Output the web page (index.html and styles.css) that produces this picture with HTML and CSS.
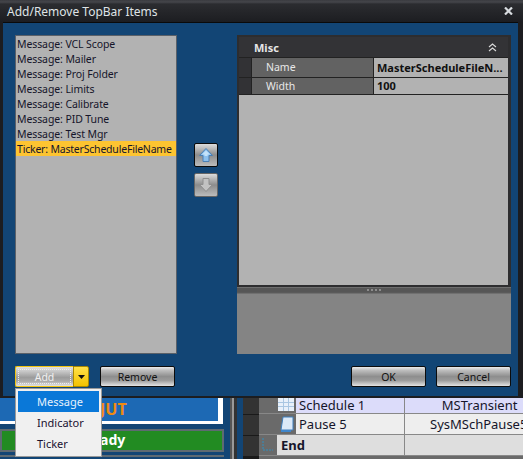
FILE: index.html
```html
<!DOCTYPE html>
<html lang="en">
<head>
<meta charset="utf-8">
<title>Add/Remove TopBar Items</title>
<link rel="stylesheet" href="styles.css">
</head>
<body>
<div class="page">
  <div class="dialog">
    <div class="titlebar">
      <span class="title">Add/Remove TopBar Items</span>
      <svg class="close" width="9" height="8" viewBox="0 0 9 8"><path d="M1 0.5 L8 7.5 M8 0.5 L1 7.5" stroke="#d8dce0" stroke-width="2.2" fill="none"/></svg>
    </div>
    <div class="body">
      <div class="main">
        <div class="list">
          <div class="item">Message: VCL Scope</div>
          <div class="item">Message: Mailer</div>
          <div class="item">Message: Proj Folder</div>
          <div class="item">Message: Limits</div>
          <div class="item">Message: Calibrate</div>
          <div class="item">Message: PID Tune</div>
          <div class="item">Message: Test Mgr</div>
          <div class="item selected">Ticker: MasterScheduleFileName</div>
        </div>
        <div class="movers">
          <button class="mover active" aria-label="Move up">
            <svg width="16" height="16" viewBox="0 0 16 16"><path d="M8 1.5 L14.5 8.5 H11 V14.5 H5 V8.5 H1.5 Z" fill="#8cc0ee" stroke="#4a7fb5"/><path d="M8 3.5 L12 7.5 H9.5 V9 H6.5 V7.5 H4 Z" fill="#c4e2fa"/></svg>
          </button>
          <button class="mover" aria-label="Move down">
            <svg width="16" height="16" viewBox="0 0 16 16"><path d="M8 14.5 L14.5 7.5 H11 V1.5 H5 V7.5 H1.5 Z" fill="#c2c2c2" stroke="#8e8e8e"/></svg>
          </button>
        </div>
        <div class="props">
          <div class="grid-area">
            <div class="cat">
              <span class="cat-name">Misc</span>
              <svg class="chev" width="9" height="9" viewBox="0 0 9 9"><path d="M1 4 L4.5 1 L8 4 M1 8 L4.5 5 L8 8" stroke="#dcdcdc" stroke-width="1.1" fill="none"/></svg>
            </div>
            <div class="prop">
              <span class="gutter"></span>
              <span class="pname">Name</span>
              <span class="pval">MasterScheduleFileN...</span>
            </div>
            <div class="prop">
              <span class="gutter"></span>
              <span class="pname">Width</span>
              <span class="pval">100</span>
            </div>
          </div>
          <div class="splitter"><i></i><i></i><i></i><i></i></div>
          <div class="desc"></div>
        </div>
      </div>
      <div class="actions">
        <div class="split">
          <button class="btn add"><span class="add-label">Add</span></button>
          <button class="drop" aria-label="Open"><svg width="7" height="4" viewBox="0 0 7 4"><path d="M0 0 H7 L3.5 4 Z" fill="#111"/></svg></button>
        </div>
        <button class="btn">Remove</button>
        <span class="spacer"></span>
        <button class="btn">OK</button>
        <button class="btn">Cancel</button>
      </div>
    </div>
  </div>
  <div class="app">
    <div class="app-left">
      <div class="tile-blue"><span class="tile-text">JUT</span></div>
      <div class="tile-green">ady</div>
      <div class="tile-next"></div>
    </div>
    <div class="app-rails"></div>
    <div class="app-keys"><i class="key-short"></i><i></i><i></i></div>
    <div class="app-table">
      <div class="row lilac">
        <span class="ico"><svg width="16" height="13" viewBox="0 0 16 13"><path d="M0 0 H16 V13 H0 Z" fill="#e8f0fa"/><path d="M0 4.5 H16 M0 8.5 H16 M5.5 0 V13 M10.5 0 V13" stroke="#a9c6e2" fill="none"/></svg></span>
        <span class="c1">Schedule 1</span><span class="c2">MSTransient</span>
      </div>
      <div class="row plain">
        <span class="ico"><svg width="14" height="17" viewBox="0 0 14 17"><path d="M3 1 H13 V14 H1 Z" fill="#dbe9f7" stroke="#3f7fbd"/><path d="M1 14 H11 V16 H1 Z" fill="#3f86cc"/></svg></span>
        <span class="c1">Pause 5</span><span class="c2 clip">SysMSchPause5</span>
      </div>
      <div class="row end">
        <span class="ico end-ico"><svg width="14" height="16" viewBox="0 0 14 16"><path d="M2 1 V13 H12" stroke="#2f8fc0" stroke-dasharray="2 1" fill="none"/></svg></span>
        <span class="c1 bold">End</span><span class="c2"></span>
      </div>
    </div>
  </div>
  <div class="menu">
    <div class="menu-item hot">Message</div>
    <div class="menu-item">Indicator</div>
    <div class="menu-item">Ticker</div>
  </div>
</div>
</body>
</html>
```
FILE: styles.css
```css
* { box-sizing: border-box; }
html, body { margin: 0; padding: 0; }
body { width: 523px; height: 459px; overflow: hidden; background: #2a2a2a; font-family: "Noto Sans", Tahoma, sans-serif; font-size: 11px; color: #15152a; }
.page { position: relative; width: 523px; height: 459px; display: flex; flex-direction: column; }
.dialog { height: 398px; flex: none; display: flex; flex-direction: column; background: #1c1d20; }
.titlebar { height: 22px; flex: none; display: flex; align-items: center; justify-content: space-between; padding: 0 10px 0 7px; background: linear-gradient(#3a3b40 0, #45464b 2px, #2b2c30 4px, #1c1d21 100%); }
.title { color: #dfe3e6; font-size: 12px; }
.body { flex: 1; margin: 0 5px 2px 3px; border-top: 1px solid #0a0a0a; background: #124575; padding: 12px 7px 9px 12px; display: flex; flex-direction: column; }
.main { height: 319px; flex: none; display: flex; }
.list { width: 162px; flex: none; background: #b2b2b2; border: 1px solid #5a6068; }
.item { height: 15px; line-height: 17px; padding-left: 1px; white-space: nowrap; font-size: 10.5px; letter-spacing: -.1px; }
.item.selected { background: #fdc431; letter-spacing: -.2px; }
.movers { width: 60px; flex: none; display: flex; flex-direction: column; align-items: center; gap: 6px; padding-top: 108px; padding-right: 2px; }
.mover { width: 24px; height: 24px; padding: 0; border: 1px solid #666; border-radius: 2px; background: linear-gradient(#dcdcdc, #8c8c8c 50%, #bcbcbc); display: flex; align-items: center; justify-content: center; }
.mover.active { border-color: #0a0a0a; }
.props { flex: 1; display: flex; flex-direction: column; }
.grid-area { height: 252px; flex: none; background: #b2b2b2; border: 2px solid #2d2d2f; border-right-width: 3px; }
.cat { height: 20px; background: #333336; display: flex; align-items: center; justify-content: space-between; padding: 0 11px 0 15px; }
.cat-name { color: #e6e6e6; font-weight: 700; font-size: 11px; }
.prop { height: 20px; display: flex; border-top: 1px solid #222; }
.prop:last-child { height: 18px; border-bottom: 1px solid #222; }
.prop:last-child .pname, .prop:last-child .pval { line-height: 16px; }
.gutter { width: 13px; flex: none; background: #323235; border-right: 1px solid #222; }
.pname { width: 122px; flex: none; background: #626262; color: #e8e8e8; padding-left: 14px; font-size: 10.5px; line-height: 19px; border-right: 1px solid #222; }
.pval { flex: 1; background: #b2b2b2; color: #101010; font-weight: 700; font-size: 11px; line-height: 19px; padding-left: 3px; white-space: nowrap; overflow: hidden; }
.splitter { height: 5px; flex: none; background: #565656; border-top: 1px solid #6e6e6e; display: flex; align-items: center; justify-content: center; gap: 2px; }
.splitter i { width: 2px; height: 2px; background: #8c8c8c; }
.desc { flex: 1; background: #848484; border-top: 1px solid #5a5a5a; box-shadow: inset 0 1px 0 #707070; }
.actions { margin-top: 12px; display: flex; gap: 11px; height: 21px; }
.spacer { flex: 1; }
.btn { width: 75px; height: 21px; padding: 0; border: 1px solid #0c0c0c; border-radius: 2px; font: inherit; font-size: 10.5px; color: #111; background: linear-gradient(#ececec 0, #bdbdbd 18%, #8e8e8e 50%, #9a9a9a 70%, #e4e4e4 100%); }
.actions .btn:last-child { margin-left: -1px; }
.split { display: flex; width: 74px; }
.btn.add { width: 58px; border: 1px solid #f1c40f; border-right: 0; border-radius: 2px 0 0 2px; color: #f0f0f0; background: linear-gradient(#e2e2e2 0, #c4c4c4 25%, #9c9c9c 55%, #aaa 75%, #e4e4e4 100%); display: flex; align-items: center; justify-content: center; padding: 2px; }
.add-label { display: block; width: 100%; height: 100%; line-height: 15px; border: 1px dotted #eee; }
.drop { width: 16px; height: 21px; padding: 0; border: 1px solid #a98800; border-radius: 0 2px 2px 0; background: linear-gradient(#ffe14a, #f2c200); display: flex; align-items: center; justify-content: center; }
.app { flex: 1; display: flex; background: #124575; min-height: 0; overflow: hidden; }
.app-left { width: 230px; flex: none; display: flex; flex-direction: column; }
.tile-blue { width: 223px; height: 26px; flex: none; background: #1d69b4; border: 4px solid #fff; border-width: 0 5px 3px 0; padding-left: 100px; font-weight: 700; font-size: 16px; line-height: 22px; color: #f08a10; }
.tile-green { width: 224px; height: 23px; flex: none; margin-top: 5px; background: #228b22; border: 2px solid #5e6a72; color: #fff; font-weight: 700; font-size: 14px; line-height: 17px; padding-left: 98px; }
.tile-next { width: 224px; height: 2px; flex: none; margin-top: 3px; background: #5e6a72; }
.app-rails { width: 13px; flex: none; background: linear-gradient(90deg, #555 0 2px, #999 2px 4px, #333 4px 7px, #124575 7px 100%); }
.app-keys { width: 16px; flex: none; background: #1a1a1a; display: flex; flex-direction: column; gap: 1px; }
.app-keys i { height: 20px; flex: none; background: #333; }
.app-keys .key-short { height: 16px; }
.app-table { flex: 1; background: #6a6a6a; display: flex; flex-direction: column; }
.row { height: 21px; display: flex; align-items: center; flex: none; font-size: 13px; border-bottom: 1px solid #888; color: #15152a; }
.ico { width: 37px; flex: none; align-self: stretch; background: #6a6a6a; display: flex; align-items: center; justify-content: flex-end; padding-right: 2px; }
.end-ico { width: 18px; justify-content: flex-start; padding-left: 2px; }
.c1 { width: 109px; flex: none; padding-left: 3px; align-self: stretch; line-height: 20px; border-right: 1px solid #888; }
.c2 { flex: 1; white-space: nowrap; text-align: right; padding-right: 10px; align-self: stretch; line-height: 20px; }
.c2.clip { text-align: left; padding: 0 0 0 25px; overflow: hidden; }
.row.lilac { height: 16px; background: #dcdcfa; }
.row.lilac .c1, .row.lilac .c2 { line-height: 15px; }
.row.lilac .ico { align-items: flex-start; }
.row.plain { background: #eeeeee; }
.row.end { background: #dedede; }
.row.end .c1 { width: 128px; padding-left: 4px; }
.bold { font-weight: 700; }
.menu { position: absolute; left: 15px; top: 388px; width: 87px; height: 69px; background: #f0f0f0; border: 1px solid #9a9a9a; padding: 2px; font-size: 11px; }
.menu-item { height: 21px; line-height: 21px; padding-left: 19px; color: #1a1030; }
.menu-item.hot { background: #0a78d8; color: #e6f2fc; }
```
